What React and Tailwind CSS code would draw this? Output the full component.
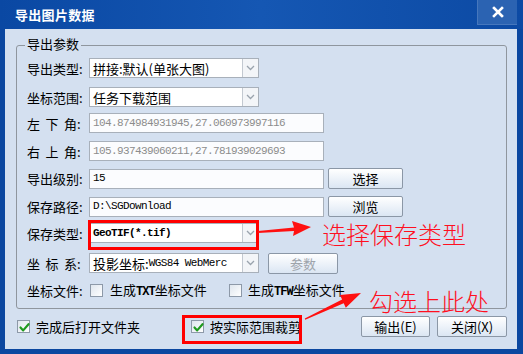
import React from 'react';

const Check = () => (
  <svg width="13" height="13" viewBox="0 0 13 13" className="block">
    <path d="M2.5 6.5 L5.2 9.4 L10.5 3.2" fill="none" stroke="#1f9a1f" strokeWidth="2.2" strokeLinecap="round" strokeLinejoin="round" />
  </svg>
);

const CheckBox = ({ checked }) => (
  <div className="w-[13px] h-[13px] border border-[#8d99a8] bg-gradient-to-br from-[#dfe6ee] to-white shrink-0">
    {checked && <Check />}
  </div>
);

const Chevron = () => (
  <svg width="9" height="6" viewBox="0 0 9 6">
    <path d="M1 1 L4.5 4.5 L8 1" fill="none" stroke="#9aa3ad" strokeWidth="1.3" />
  </svg>
);

const Combo = ({ children, mono }) => (
  <div className="w-[170px] h-[20px] border border-[#a8b0ba] bg-white flex items-stretch">
    <div className={`flex-1 pl-[3px] flex items-center text-black ${mono ? 'text-[12px]' : 'text-[13px]'}`}>{children}</div>
    <div className="w-[16px] border-l border-[#c3c9d1] bg-[#f3f5f8] flex items-center justify-center">
      <Chevron />
    </div>
  </div>
);

const Field = ({ children, grey }) => (
  <div className={`w-[235px] h-[20px] border border-[#a8b0ba] bg-[#fbfcfe] pl-[3px] flex items-center font-['Liberation_Mono','Noto_Sans_CJK_SC',monospace] text-[11px] tracking-[-0.6px] ${grey ? 'text-[#8c8c8c]' : 'text-black'}`}>
    {children}
  </div>
);

const Btn = ({ children, w = 'w-[75px]', disabled }) => (
  <button className={`${w} h-[21px] border border-[#8b97a6] rounded-[2px] bg-gradient-to-b from-white to-[#dbe6f3] text-[13px] leading-none flex items-center justify-center ${disabled ? 'text-[#9ea4ab]' : 'text-black'}`}>
    {children}
  </button>
);

const Label = ({ children, spread }) => (
  <div className="w-[62px] shrink-0 flex items-center text-[13px] text-black">
    {spread ? (
      <div className="w-[50px] flex justify-between">
        {spread.map((c) => <span key={c}>{c}</span>)}
      </div>
    ) : (
      <span>{children}</span>
    )}
    <span>{spread ? ':' : ''}</span>
  </div>
);

export default function App() {
  return (
    <div className="w-[523px] h-[354px] bg-[#0b47a0] flex flex-col relative overflow-hidden font-['Noto_Sans_CJK_SC',sans-serif] leading-none">
      {/* title bar */}
      <div className="h-[29px] flex bg-gradient-to-r from-[#0a48a3] via-[#1557b3] to-[#0c4aa4]">
        <div className="flex-1 pl-[15px] flex items-center text-white text-[13px] font-bold tracking-[0.3px]">导出图片数据</div>
        <div className="w-[40px] h-[25px] mr-[6px] bg-[#2b63b2] border-l border-b border-[#4677bd] flex items-center justify-center">
          <svg width="12" height="12" viewBox="0 0 12 12">
            <path d="M2 2 L10 10 M10 2 L2 10" stroke="white" strokeWidth="2.6" strokeLinecap="square" />
          </svg>
        </div>
      </div>

      {/* body */}
      <div className="mx-[5px] mr-[6px] h-[320px] bg-[#d4e0f0] flex flex-col">
        <div className="mt-[16px] ml-[11px] w-[491px] h-[264px] border border-[#8f969e] rounded-[3px] relative pl-[10px] pt-[12px] flex flex-col">
          <span className="absolute -top-[9px] left-[8px] px-[2px] bg-[#d4e0f0] text-[13px] text-black">导出参数</span>

          <div className="flex items-center h-[20px]">
            <Label>导出类型:</Label>
            <Combo>拼接:默认(单张大图)</Combo>
          </div>
          <div className="flex items-center h-[20px] mt-[9px]">
            <Label>坐标范围:</Label>
            <Combo>任务下载范围</Combo>
          </div>
          <div className="flex items-center h-[20px] mt-[6px]">
            <Label spread={['左', '下', '角']} />
            <Field grey>104.874984931945,27.060973997116</Field>
          </div>
          <div className="flex items-center h-[20px] mt-[8px]">
            <Label spread={['右', '上', '角']} />
            <Field grey>105.937439060211,27.781939029693</Field>
          </div>
          <div className="flex items-center h-[21px] mt-[7px]">
            <Label>导出级别:</Label>
            <Field>15</Field>
            <div className="ml-[4px]"><Btn>选择</Btn></div>
          </div>
          <div className="flex items-center h-[21px] mt-[7px]">
            <Label>保存路径:</Label>
            <Field>D:\SGDownload</Field>
            <div className="ml-[4px]"><Btn>浏览</Btn></div>
          </div>
          <div className="flex items-center h-[20px] mt-[6px]">
            <Label>保存类型:</Label>
            <div className="relative">
              <Combo mono>
                <span className="font-['Liberation_Mono',monospace] text-[11px] tracking-[-0.6px] font-bold">GeoTIF(*.tif)</span>
              </Combo>
              <div className="absolute -left-[1px] -top-[3px] w-[171px] h-[30px] border-[3px] border-[#ff0000]" />
            </div>
          </div>
          <div className="flex items-center h-[20px] mt-[10px]">
            <Label spread={['坐', '标', '系']} />
            <Combo>
              <span>投影坐标:</span>
              <span className="font-['Liberation_Mono',monospace] text-[11px] tracking-[-0.6px]">WGS84 WebMerc</span>
            </Combo>
            <div className="ml-[9px]"><Btn w="w-[70px]" disabled>参数</Btn></div>
          </div>
          <div className="flex items-center h-[20px] mt-[7px] text-[13px] text-black">
            <Label>坐标文件:</Label>
            <div className="ml-[1px] w-[139px] flex items-center">
              <CheckBox />
              <span className="ml-[7px]">生成<span className="font-bold font-['Liberation_Mono',monospace] text-[12px] tracking-[-1px]">TXT</span>坐标文件</span>
            </div>
            <CheckBox />
            <span className="ml-[6px]">生成<span className="font-bold font-['Liberation_Mono',monospace] text-[12px] tracking-[-1px]">TFW</span>坐标文件</span>
          </div>
        </div>

        {/* bottom row */}
        <div className="mt-[7px] h-[21px] flex items-center text-[13px] text-black">
          <div className="ml-[12px] w-[174px] flex items-center">
            <CheckBox checked />
            <span className="ml-[6px]">完成后打开文件夹</span>
          </div>
          <div className="relative flex items-center">
            <CheckBox checked />
            <span className="ml-[6px]">按实际范围裁剪</span>
            <div className="absolute -left-[9px] -top-[5px] w-[120px] h-[29px] border-[3px] border-[#ff0000]" />
          </div>
          <div className="ml-auto mr-[10px] flex gap-[7px]">
            <Btn w="w-[69px]">输出(E)</Btn>
            <Btn w="w-[70px]">关闭(X)</Btn>
          </div>
        </div>
      </div>

      {/* annotations */}
      <svg className="absolute left-0 top-0 pointer-events-none" width="523" height="354">
        <polygon points="258,231 294,227.5 292,221 311,227 293,236 294,231 258,233" fill="#ff1010" />
        <polygon points="304.8,318.5 342.1,299.6 340,295 361,293 345.8,307.8 343.7,303.2 305.2,319.8" fill="#ff1010" />
      </svg>
      <span className="absolute left-[322px] top-[222px] text-[24px] leading-[24px] text-[#ff0f1f] font-light">选择保存类型</span>
      <span className="absolute left-[369px] top-[290px] h-[24px] text-[24px] leading-[22px] text-[#ff0f1f] font-light">勾选上此处</span>
    </div>
  );
}
